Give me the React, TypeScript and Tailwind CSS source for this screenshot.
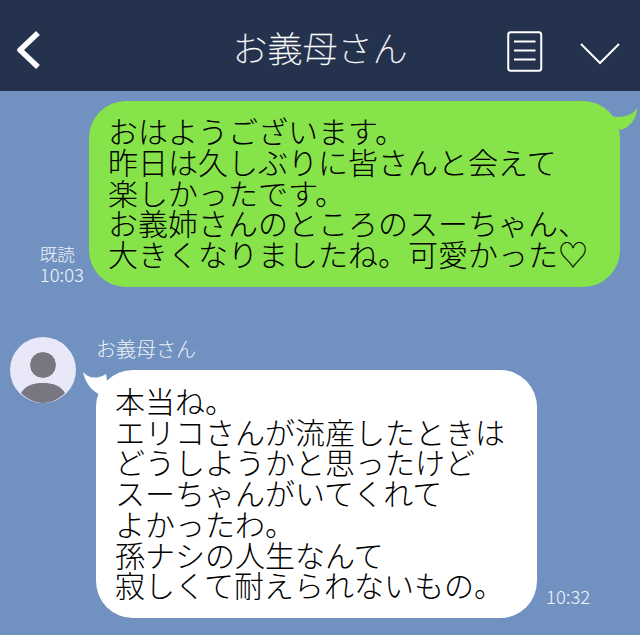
import React from 'react';

const FONT = "font-['Noto_Sans_CJK_JP','Noto_Sans',sans-serif]";

const Header = () => (
  <div className="h-[91px] bg-[#25324d] grid grid-cols-[1fr_auto_1fr] items-center shrink-0 pt-[9px]">
    <svg className="ml-[14px] w-[28px] h-[42px]" viewBox="0 0 28 42" fill="none">
      <path d="M24 4 L6 21 L24 38" stroke="#fff" strokeWidth="5.5" strokeLinejoin="round" />
    </svg>
    <div className="text-white text-[35px] font-thin leading-none pb-[7px] [-webkit-text-stroke:0.3px_white]">
      お義母さん
    </div>
    <div className="flex items-center justify-end pt-[4px]">
      <svg className="w-[36px] h-[42px]" viewBox="0 0 36 42" fill="none" stroke="#fff">
        <rect x="1.25" y="1.25" width="33" height="38.5" rx="2.5" strokeWidth="2" />
        <path d="M7 10.5 H28.5 M7 19.5 H28.5 M7 28.5 H28.5" strokeWidth="2" />
      </svg>
      <svg className="ml-[37px] mr-[20px] w-[40px] h-[42px]" viewBox="0 0 40 42" fill="none">
        <path d="M1 13 L20 32 L39 13" stroke="#fff" strokeWidth="2" />
      </svg>
    </div>
  </div>
);

const Outgoing = () => (
  <div className="flex justify-end items-end pr-[20px] pt-[10px]">
    <div className="text-white/90 text-[18.5px] font-light leading-[20px] mr-[5px] mb-[3px]">
      <div className="text-[17.5px]">既読</div>
      <div>10:03</div>
    </div>
    <div className="relative w-[531px] h-[186px] bg-[#86e34a] rounded-[37px] pl-[19px] pt-[14px] text-[30px] leading-[30.75px] font-light text-black whitespace-nowrap">
      <svg className="absolute left-[511px] top-0 w-[40px] h-[32px]" viewBox="0 0 40 32">
        <path d="M12 15 C22 18 33 14 37 7 C37 17 30 27 20 29 Z" fill="#86e34a" />
      </svg>
      <div>おはようございます。</div>
      <div>昨日は久しぶりに皆さんと会えて</div>
      <div>楽しかったです。</div>
      <div>お義姉さんのところのスーちゃん、</div>
      <div>大きくなりましたね。可愛かった♡</div>
    </div>
  </div>
);

const Avatar = () => (
  <svg className="w-[66px] h-[66px] shrink-0" viewBox="0 0 66 66">
    <circle cx="33" cy="33" r="33" fill="#e9e8f8" />
    <circle cx="33" cy="28" r="13.5" fill="#787681" stroke="#f7f7ff" strokeWidth="1" />
    <path d="M11 56 C16 48 24 46 33 46 C42 46 50 48 55 56 C49 62 41 66 33 66 C25 66 17 62 11 56 Z" fill="#787681" />
  </svg>
);

const Incoming = () => (
  <div className="flex items-start pl-[10px] pt-[50px]">
    <Avatar />
    <div className="ml-[19px]">
      <div className="text-white text-[20px] font-thin leading-[24px] mb-[9px] ml-[1px] [-webkit-text-stroke:0.2px_white]">お義母さん</div>
      <div className="flex items-end ml-[1px]">
        <div className="relative w-[441px] h-[248px] bg-white rounded-[37px] pl-[19px] pt-[15px] text-[30px] leading-[30.7px] font-light text-black whitespace-nowrap">
          <svg className="absolute left-[-14px] top-0 w-[30px] h-[32px]" viewBox="0 0 30 32">
            <path d="M1 2 C6 8 14 10 24 4 L28 30 L15 23 C8 19 3 11 1 2 Z" fill="#fff" />
          </svg>
          <div>本当ね。</div>
          <div>エリコさんが流産したときは</div>
          <div>どうしようかと思ったけど</div>
          <div>スーちゃんがいてくれて</div>
          <div>よかったわ。</div>
          <div>孫ナシの人生なんて</div>
          <div>寂しくて耐えられないもの。</div>
        </div>
        <div className="text-white/90 text-[18.5px] font-light leading-[23px] ml-[9px] mb-[10px]">10:32</div>
      </div>
    </div>
  </div>
);

export default function App() {
  return (
    <div className={`w-[640px] h-[635px] overflow-hidden bg-[#7192c1] flex flex-col ${FONT}`}>
      <Header />
      <Outgoing />
      <Incoming />
    </div>
  );
}
